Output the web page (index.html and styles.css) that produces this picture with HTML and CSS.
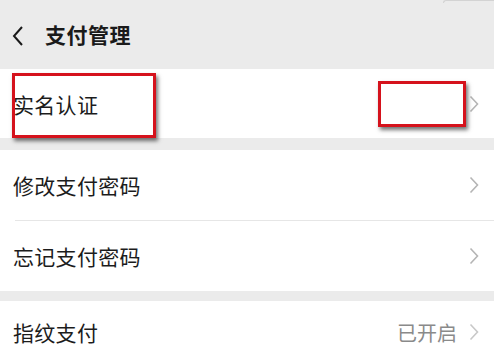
FILE: index.html
```html
<!DOCTYPE html>
<html lang="zh-CN">
<head>
<meta charset="utf-8">
<link rel="stylesheet" href="styles.css">
</head>
<body>
<div class="page">
  <div class="topline"></div>
  <header class="header">
    <svg class="back" width="14" height="22" viewBox="0 0 14 22"><path d="M11 2 L3 11 L11 20" fill="none" stroke="#1a1a1a" stroke-width="2"/></svg>
    <span class="title">支付管理</span>
  </header>
  <section class="group g1">
    <div class="row r1"><span class="label">实名认证</span><span class="right"><svg class="chev" width="10" height="18" viewBox="0 0 10 18"><path d="M1.5 1.5 L8.5 9 L1.5 16.5" fill="none" stroke="#b5b5b5" stroke-width="1.6"/></svg></span></div>
  </section>
  <section class="group g2">
    <div class="row"><span class="label">修改支付密码</span><span class="right"><svg class="chev" width="10" height="18" viewBox="0 0 10 18"><path d="M1.5 1.5 L8.5 9 L1.5 16.5" fill="none" stroke="#b5b5b5" stroke-width="1.6"/></svg></span></div>
    <div class="divider"></div>
    <div class="row"><span class="label">忘记支付密码</span><span class="right"><svg class="chev" width="10" height="18" viewBox="0 0 10 18"><path d="M1.5 1.5 L8.5 9 L1.5 16.5" fill="none" stroke="#b5b5b5" stroke-width="1.6"/></svg></span></div>
  </section>
  <section class="group g3">
    <div class="row r4"><span class="label">指纹支付</span><span class="right"><span class="value">已开启</span><svg class="chev" width="10" height="18" viewBox="0 0 10 18"><path d="M1.5 1.5 L8.5 9 L1.5 16.5" fill="none" stroke="#c8c8c8" stroke-width="1.6"/></svg></span></div>
  </section>
  <div class="mark mark1"></div>
  <div class="mark mark2"></div>
</div>
</body>
</html>
```

FILE: styles.css
```css
html, body {
  margin: 0;
  padding: 0;
  background: #ebebeb;
}
.page {
  position: relative;
  width: 494px;
  height: 346px;
  overflow: hidden;
  background: #ebebeb;
  font-family: "Noto Sans CJK SC", "Noto Sans", sans-serif;
  color: #1c1c1c;
}
.topline {
  position: absolute;
  left: 443px;
  top: 0;
  width: 60px;
  height: 2px;
  border-top: 1px solid #c9c9c9;
  border-left: 1px solid #c9c9c9;
  border-radius: 4px 0 0 0;
  opacity: 0.7;
}
.header {
  height: 69px;
  display: flex;
  align-items: center;
  padding-left: 11px;
  box-sizing: border-box;
}
.back {
  display: block;
  margin-right: 20px;
  margin-top: 2px;
}
.title {
  font-size: 21px;
  font-weight: 700;
  letter-spacing: 0.5px;
  color: #1a1a1a;
  margin-top: -1px;
}
.group {
  background: #fff;
}
.g2 { margin-top: 12px; }
.g3 { margin-top: 10px; }
.row {
  height: 70px;
  display: flex;
  align-items: center;
  justify-content: space-between;
  padding: 0 15px 0 13px;
  box-sizing: border-box;
}
.r1 { height: 69px; }
.r4 { height: 62px; }
.label {
  font-size: 21px;
  letter-spacing: 0.3px;
  color: #1c1c1c;
}
.right {
  display: flex;
  align-items: center;
}
.chev { display: block; }
.value {
  font-size: 20px;
  color: #8a8a8a;
  margin-right: 12px;
}
.divider {
  height: 1px;
  margin-left: 15px;
  background: #e6e6e6;
}
.mark {
  position: absolute;
  border: 3px solid #d5121c;
  box-sizing: border-box;
  box-shadow: 2px 3px 4px rgba(0, 0, 0, 0.55);
}
.mark1 {
  left: 12px;
  top: 73px;
  width: 144px;
  height: 65px;
}
.mark2 {
  left: 378px;
  top: 81px;
  width: 88px;
  height: 46px;
  background: #fff;
}
```
